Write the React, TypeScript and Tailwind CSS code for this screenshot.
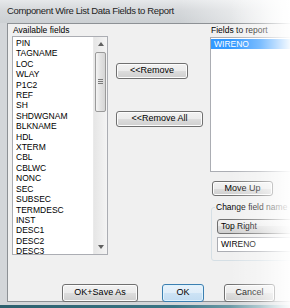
import React from "react";

const fields = [
  "PIN", "TAGNAME", "LOC", "WLAY", "P1C2", "REF", "SH", "SHDWGNAM", "BLKNAME", "HDL", "XTERM",
  "CBL", "CBLWC", "NONC", "SEC", "SUBSEC", "TERMDESC", "INST", "DESC1", "DESC2", "DESC3",
];

const btn =
  "flex items-center justify-center rounded-[3px] border border-[#707070] bg-[linear-gradient(#f2f2f2_0%,#ebebeb_50%,#dddddd_50%,#cfcfcf_100%)] shadow-[inset_0_0_0_1px_#fcfcfc] text-[9px] text-black";

const Btn = ({ label, cls }: { label: string; cls: string }) => (
  <div className={`${btn} ${cls}`}>{label}</div>
);

const App = () => {
  return (
    <div className="relative w-[290px] h-[308px] overflow-hidden bg-[#d3d6d9] font-['Liberation_Sans',Arial,sans-serif] text-black">
      {/* title bar */}
      <div className="h-[23px] flex items-center pl-[7px] bg-[linear-gradient(#e6e8ea,#d5d8db_45%,#ccd0d3)]">
        <span className="text-[9.5px] tracking-[-0.35px] text-[#1e1e1e]">
          Component Wire List Data Fields to Report
        </span>
      </div>

      {/* client area */}
      <div className="ml-[7px] w-[320px] h-[279px] bg-[#f0f0f0] border-t border-l border-b border-[#8d9195] flex flex-col">
        <div className="flex pt-[1px] pl-[4px]">
          {/* available fields */}
          <div className="w-[96px] shrink-0 flex flex-col">
            <div className="h-[11px] pl-[1px] text-[8.5px] leading-[11px]">Available fields</div>
            <div className="h-[219px] flex bg-white border border-[#abadb3]">
              <div className="flex-1 pt-[1px] pl-[3px]">
                {fields.map((f) => (
                  <div key={f} className="text-[8.5px] leading-[10.4px]">
                    {f}
                  </div>
                ))}
              </div>
              <div className="w-[14px] flex flex-col items-center bg-[linear-gradient(90deg,#e6e6e6,#f4f4f4)] border-l border-[#eaeaea]">
                <div className="h-[14px] flex items-center justify-center">
                  <svg width="6" height="4" viewBox="0 0 6 4">
                    <path d="M0 4 L3 0 L6 4 Z" fill="#606060" />
                  </svg>
                </div>
                <div className="w-[11px] h-[60px] mt-[1px] flex items-center justify-center rounded-[2px] border border-[#9a9a9a] bg-[linear-gradient(90deg,#f4f4f4,#e2e2e2_50%,#d6d6d6)]">
                  <svg width="5" height="6" viewBox="0 0 5 6">
                    <path d="M0 0.5 H5 M0 2.5 H5 M0 4.5 H5" stroke="#7a7a7a" strokeWidth="1" />
                  </svg>
                </div>
                <div className="flex-1" />
                <div className="h-[14px] flex items-center justify-center">
                  <svg width="6" height="4" viewBox="0 0 6 4">
                    <path d="M0 0 L3 4 L6 0 Z" fill="#606060" />
                  </svg>
                </div>
              </div>
            </div>
          </div>

          {/* middle buttons */}
          <div className="ml-[8px] shrink-0 flex flex-col pt-[38px]">
            <Btn label="<<Remove" cls="w-[72px] h-[16px]" />
            <Btn label="<<Remove All" cls="w-[87px] h-[16px] mt-[32px]" />
          </div>

          {/* fields to report */}
          <div className="ml-[7px] shrink-0 flex flex-col w-[120px]">
            <div className="h-[12px] pl-[1px] text-[8.5px] leading-[11px]">Fields to report</div>
            <div className="h-[135px] bg-white border border-[#abadb3] pt-[1px]">
              <div className="h-[10px] pl-[3px] bg-[#3399ff] text-white text-[8.5px] leading-[10px]">WIRENO</div>
            </div>
            <Btn label="Move Up" cls="w-[61px] h-[15px] mt-[9px] ml-[2px]" />
            <div className="relative mt-[11px] ml-[1px] h-[54px] border border-[#d5dfe5] rounded-[3px] pt-[11px] pl-[5px]">
              <span className="absolute -top-[6px] left-[3px] px-[1px] bg-[#f0f0f0] text-[8.5px] leading-[11px]">
                Change field name
              </span>
              <div className="h-[15px] flex items-center pl-[3px] rounded-[3px] border border-[#707070] bg-[linear-gradient(#f2f2f2_0%,#ebebeb_50%,#dddddd_50%,#cfcfcf_100%)] text-[8.5px]">
                Top Right
              </div>
              <div className="h-[15px] mt-[3px] flex items-center pl-[3px] bg-white border border-[#abadb3] text-[8.5px]">
                WIRENO
              </div>
            </div>
          </div>
        </div>

        {/* bottom buttons */}
        <div className="flex mt-[23px] pl-[54px]">
          <Btn label="OK+Save As" cls="w-[76px] h-[18px]" />
          <div className="ml-[24px] w-[42px] h-[18px] flex items-center justify-center rounded-[3px] border border-[#3c7fb1] bg-[linear-gradient(#e8f2fb_0%,#dfedf9_50%,#cde3f5_50%,#c2dcf2_100%)] shadow-[inset_0_0_0_1px_#dff3fd] text-[9px]">
            OK
          </div>
          <Btn label="Cancel" cls="w-[51px] h-[18px] ml-[20px]" />
        </div>
      </div>

      {/* bottom frame and desktop */}
      <div className="h-[3px] bg-[#d3d6d9]" />
      <div className="h-[3px] bg-[linear-gradient(90deg,#2c5f6d,#3a7585_60%,#9fc0c8)]" />

      {/* title bar glare and right edge fade */}
      <div className="pointer-events-none absolute top-0 right-0 w-[110px] h-[23px] bg-[linear-gradient(90deg,rgba(255,255,255,0),rgba(255,255,255,0.9))]" />
      <div className="pointer-events-none absolute top-0 right-0 w-[60px] h-full bg-[linear-gradient(90deg,rgba(255,255,255,0),rgba(255,255,255,0.35)_50%,rgba(255,255,255,0.95))]" />
    </div>
  );
};

export default App;
